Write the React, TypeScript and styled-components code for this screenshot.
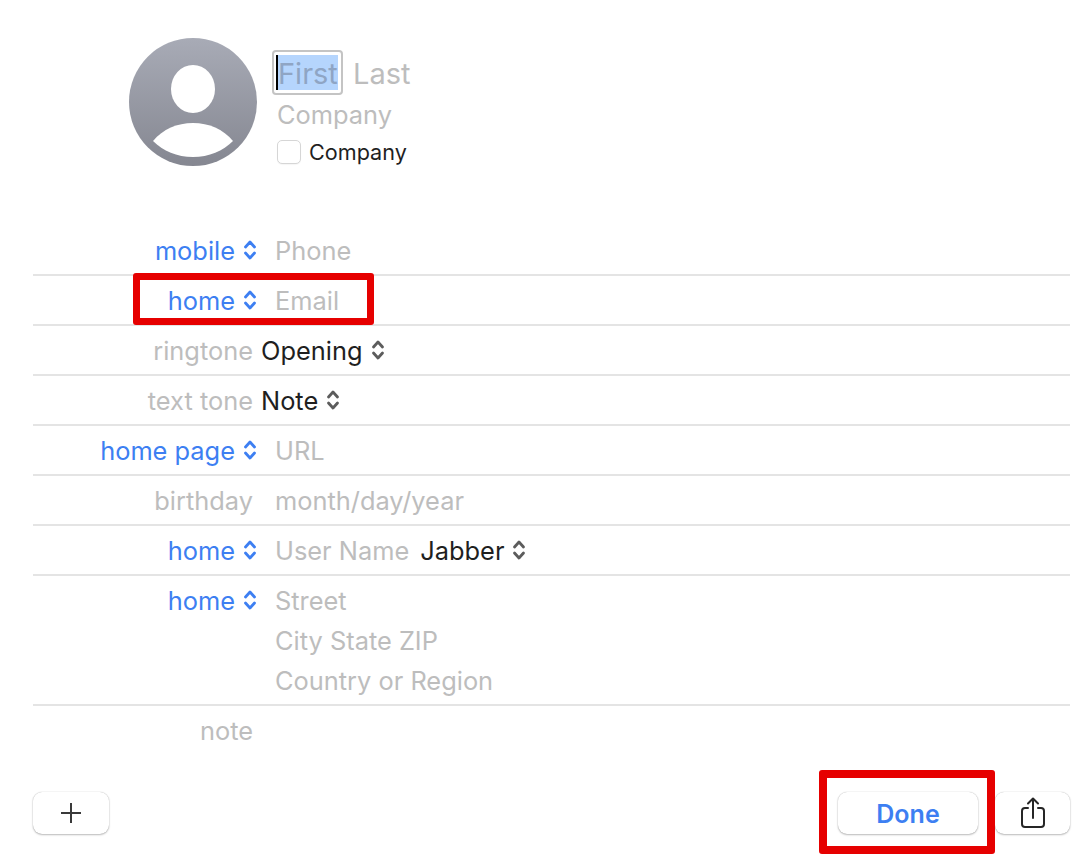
import React from "react";
import styled, { createGlobalStyle } from "styled-components";

const Global = createGlobalStyle`
  html, body { margin: 0; padding: 0; background: #fff; }
  body { font-family: Inter, "Liberation Sans", sans-serif; }
`;

const Page = styled.div`
  position: relative;
  width: 1090px;
  height: 868px;
  box-sizing: border-box;
  padding-top: 38px;
  overflow: hidden;
  font-size: 25.4px;
  line-height: 30px;
  color: #1f1f1f;
`;

const Header = styled.header`
  display: flex;
  align-items: flex-start;
  gap: 15px;
  padding-left: 129px;
  height: 187px;
`;

const Avatar = styled.svg`
  width: 128px;
  height: 128px;
  flex: none;
`;

const NameBlock = styled.div`
  display: flex;
  flex-direction: column;
  padding-top: 12px;
`;

const NameRow = styled.div`
  display: flex;
  align-items: center;
  gap: 10px;
  height: 45px;
  font-size: 29px;
`;

const FocusBox = styled.div`
  box-sizing: border-box;
  width: 71px;
  height: 45px;
  border: 2px solid #c4c4c4;
  border-radius: 4px;
  padding: 3px 4px 3px 2px;
  display: flex;
`;

const Selection = styled.span`
  flex: 1;
  background: #b5d5fd;
  color: #8fa5c4;
  height: 35px;
  line-height: 37px;
  border-left: 2px solid #000;
`;

const Placeholder = styled.span`
  color: #bdbdbd;
  white-space: nowrap;
  padding-top: 2px;
`;

const CompanyLine = styled.div`
  margin: 4px 0 0 5px;
  height: 36px;
  line-height: 32px;
  color: #bdbdbd;
`;

const CheckRow = styled.label`
  display: flex;
  align-items: center;
  gap: 8px;
  margin: 5px 0 0 5px;
  font-size: 21.6px;
  height: 24px;
`;

const CheckBox = styled.span`
  box-sizing: border-box;
  width: 24px;
  height: 24px;
  border: 1px solid #d6d6d6;
  border-radius: 5px;
  background: #fff;
  box-shadow: 0 1px 1px rgba(0, 0, 0, 0.04);
`;

const Rows = styled.div`
  margin: 0 20px 0 33px;
`;

const Row = styled.div<{ $tall?: boolean; $bare?: boolean }>`
  display: grid;
  grid-template-columns: 220px 1fr;
  padding-top: 11px;
  box-sizing: content-box;
  height: ${(p) => (p.$tall ? 118 : 38)}px;
  border-bottom: ${(p) => (p.$bare ? "none" : "2px solid #e4e4e4")};
  margin-bottom: -1px;
`;

const LabelCell = styled.div`
  display: flex;
  justify-content: flex-end;
  align-items: flex-start;
  white-space: nowrap;
  height: 30px;
`;

const BlueLabel = styled.span`
  color: #3d7ff2;
`;

const GreyLabel = styled.span`
  color: #bdbdbd;
`;

const Chevrons = styled.svg<{ $dark?: boolean }>`
  flex: none;
  width: 14px;
  height: 22px;
  margin: 3px ${(p) => (p.$dark ? 0 : -4)}px 0 8px;
  fill: none;
  stroke: ${(p) => (p.$dark ? "#5c5c5c" : "#3d7ff2")};
  stroke-width: 2.8;
  stroke-linecap: round;
  stroke-linejoin: round;
`;

const ValueCell = styled.div<{ $tight?: boolean }>`
  display: flex;
  flex-direction: column;
  padding-left: ${(p) => (p.$tight ? 8 : 22)}px;
  line-height: 30px;
`;

const AddressLine = styled.span`
  color: #bdbdbd;
  height: 40px;
  line-height: 30px;
  white-space: nowrap;
`;

const InlineValue = styled.div`
  display: flex;
  align-items: flex-start;
  white-space: nowrap;
`;

const DarkText = styled.span`
  color: #1f1f1f;
`;

const Gap = styled.span`
  width: 11px;
`;

const Footer = styled.footer`
  display: flex;
  align-items: center;
  margin: 0 20px 0 33px;
  position: absolute;
  left: 0;
  right: 0;
  top: 792px;
`;

const ToolButton = styled.button<{ $w: number }>`
  width: ${(p) => p.$w}px;
  height: 42px;
  box-sizing: border-box;
  border: none;
  border-radius: 9px;
  background: #fff;
  box-shadow: 0 0 1px rgba(0, 0, 0, 0.3), 0 1px 2px rgba(0, 0, 0, 0.25);
  display: flex;
  align-items: center;
  justify-content: center;
  padding: 0;
  font-family: inherit;
`;

const DoneButton = styled(ToolButton)`
  color: #3d7ff2;
  font-size: 25px;
  font-weight: 600;
  padding-top: 2px;
  margin-left: auto;
  margin-right: 17px;
`;

const Highlight = styled.div<{ $x: number; $y: number; $w: number; $h: number; $b: number }>`
  position: absolute;
  left: ${(p) => p.$x}px;
  top: ${(p) => p.$y}px;
  width: ${(p) => p.$w}px;
  height: ${(p) => p.$h}px;
  box-sizing: border-box;
  border: ${(p) => p.$b}px solid #e60000;
  border-radius: 3px;
  pointer-events: none;
`;

const Updown = ({ dark }: { dark?: boolean }) => (
  <Chevrons $dark={dark} viewBox="0 0 14 22">
    <path d="M2.5 8 7 3l4.5 5M2.5 14 7 19l4.5-5" />
  </Chevrons>
);

export default function App() {
  return (
    <Page>
      <Global />
      <Header>
        <Avatar viewBox="0 0 128 128">
          <defs>
            <linearGradient id="av" x1="0" y1="0" x2="0" y2="1">
              <stop offset="0" stopColor="#a8abb6" />
              <stop offset="1" stopColor="#858791" />
            </linearGradient>
          </defs>
          <circle cx="64" cy="64" r="64" fill="url(#av)" />
          <ellipse cx="64" cy="51" rx="22" ry="24" fill="#fff" />
          <path d="M24 103C34 91 48 85 64 85s30 6 40 18c-10 10-24 16-40 16s-30-6-40-16Z" fill="#fff" />
        </Avatar>
        <NameBlock>
          <NameRow>
            <FocusBox>
              <Selection>First</Selection>
            </FocusBox>
            <Placeholder>Last</Placeholder>
          </NameRow>
          <CompanyLine>Company</CompanyLine>
          <CheckRow>
            <CheckBox />
            Company
          </CheckRow>
        </NameBlock>
      </Header>
      <Rows>
        <Row>
          <LabelCell><BlueLabel>mobile</BlueLabel><Updown /></LabelCell>
          <ValueCell><GreyLabel>Phone</GreyLabel></ValueCell>
        </Row>
        <Row>
          <LabelCell><BlueLabel>home</BlueLabel><Updown /></LabelCell>
          <ValueCell><GreyLabel>Email</GreyLabel></ValueCell>
        </Row>
        <Row>
          <LabelCell><GreyLabel>ringtone</GreyLabel></LabelCell>
          <ValueCell $tight><InlineValue><DarkText>Opening</DarkText><Updown dark /></InlineValue></ValueCell>
        </Row>
        <Row>
          <LabelCell><GreyLabel>text tone</GreyLabel></LabelCell>
          <ValueCell $tight><InlineValue><DarkText>Note</DarkText><Updown dark /></InlineValue></ValueCell>
        </Row>
        <Row>
          <LabelCell><BlueLabel>home page</BlueLabel><Updown /></LabelCell>
          <ValueCell><GreyLabel>URL</GreyLabel></ValueCell>
        </Row>
        <Row>
          <LabelCell><GreyLabel>birthday</GreyLabel></LabelCell>
          <ValueCell><GreyLabel>month/day/year</GreyLabel></ValueCell>
        </Row>
        <Row>
          <LabelCell><BlueLabel>home</BlueLabel><Updown /></LabelCell>
          <ValueCell>
            <InlineValue><GreyLabel>User Name</GreyLabel><Gap /><DarkText>Jabber</DarkText><Updown dark /></InlineValue>
          </ValueCell>
        </Row>
        <Row $tall>
          <LabelCell><BlueLabel>home</BlueLabel><Updown /></LabelCell>
          <ValueCell>
            <AddressLine>Street</AddressLine>
            <AddressLine>City State ZIP</AddressLine>
            <AddressLine>Country or Region</AddressLine>
          </ValueCell>
        </Row>
        <Row $bare>
          <LabelCell><GreyLabel>note</GreyLabel></LabelCell>
          <ValueCell />
        </Row>
      </Rows>
      <Footer>
        <ToolButton $w={76}>
          <svg width="24" height="24" viewBox="0 0 24 24" stroke="#3a3a3a" strokeWidth="2">
            <path d="M12 2v20M2 12h20" />
          </svg>
        </ToolButton>
        <DoneButton $w={140}>Done</DoneButton>
        <ToolButton $w={75}>
          <svg width="26" height="34" viewBox="0 0 26 34" fill="none" stroke="#262626" strokeWidth="2" strokeLinecap="round" strokeLinejoin="round">
            <path d="M8 12H5a3 3 0 0 0-3 3v13a3 3 0 0 0 3 3h16a3 3 0 0 0 3-3V15a3 3 0 0 0-3-3h-3" />
            <path d="M13 22V3M8 7.5 13 2.5l5 5" />
          </svg>
        </ToolButton>
      </Footer>
      <Highlight $x={133} $y={273} $w={241} $h={52} $b={7} />
      <Highlight $x={819} $y={770} $w={176} $h={84} $b={8} />
    </Page>
  );
}
